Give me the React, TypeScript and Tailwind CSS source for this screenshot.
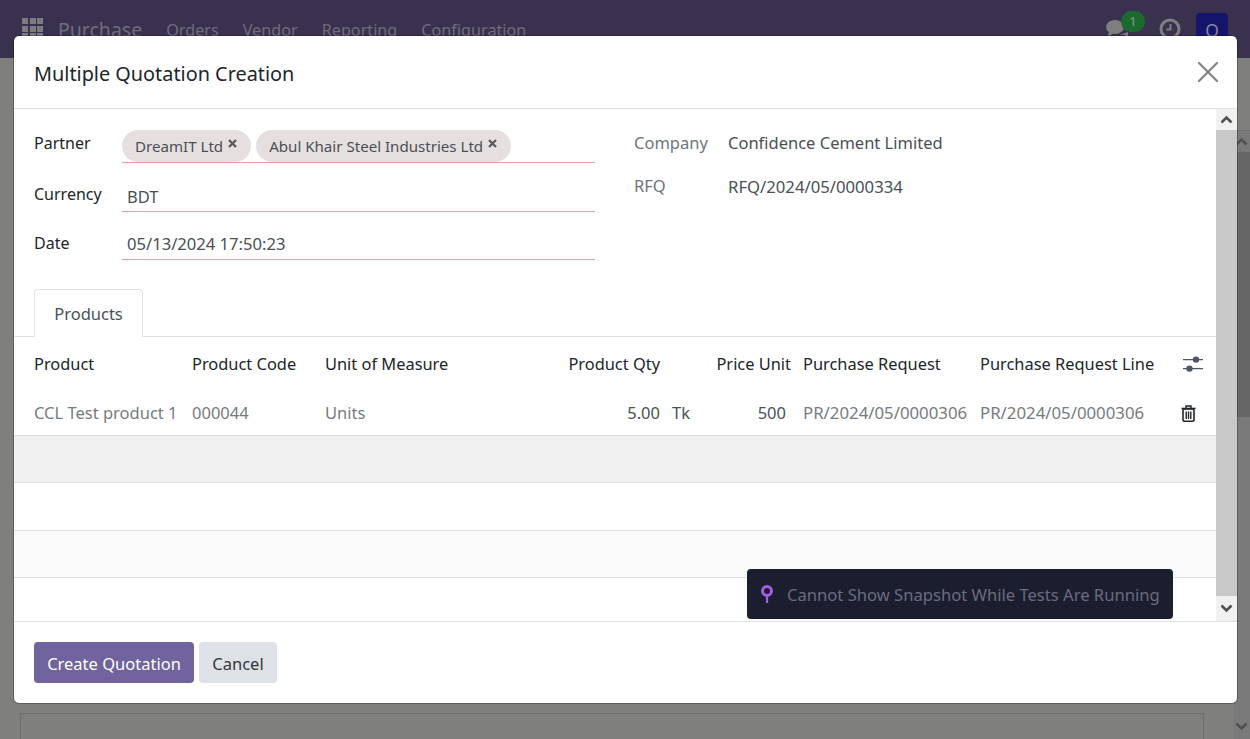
import React from 'react';
import { X } from 'lucide-react';

const navItems = ['Orders', 'Vendor', 'Reporting', 'Configuration'];

const columns = [
  { label: 'Product', cls: 'w-[178px] pl-5' },
  { label: 'Product Code', cls: 'w-[133px]' },
  { label: 'Unit of Measure', cls: 'w-[233px]' },
  { label: 'Product Qty', cls: 'w-[102px] text-right' },
  { label: '', cls: 'w-[45px]' },
  { label: 'Price Unit', cls: 'w-[86px] text-right' },
  { label: 'Purchase Request', cls: 'w-[177px] pl-3' },
  { label: 'Purchase Request Line', cls: 'w-[215px] pl-3' },
];

function Chevron({ up }: { up?: boolean }) {
  return (
    <svg width="13" height="9" viewBox="0 0 13 9" fill="none">
      <path d={up ? 'M1.5 7.5 6.5 2.5 11.5 7.5' : 'M1.5 1.5 6.5 6.5 11.5 1.5'} stroke="#505050" strokeWidth="2.6" />
    </svg>
  );
}

function Tag({ label }: { label: string }) {
  return (
    <span className="flex h-[32px] items-center whitespace-nowrap rounded-full bg-[#e6dfdf] pl-[13px] pr-[14px] text-[15.1px] text-[#4a4f55]">
      {label}
      <svg width="9" height="9" viewBox="0 0 9 9" className="ml-[5px] -mt-[5px]">
        <path d="M1 1 8 8M8 1 1 8" stroke="#5a5a5a" strokeWidth="2.3" />
      </svg>
    </span>
  );
}

function FormRow({ label, labelClass, children, className }: { label: string; labelClass: string; children: React.ReactNode; className: string }) {
  return (
    <div className={`flex h-[33px] ${className}`}>
      <span className={`w-[88px] shrink-0 text-[16px] text-[#212529] ${labelClass}`}>{label}</span>
      <div className="flex flex-1 border-b border-[#f29b9f]">{children}</div>
    </div>
  );
}

function Background() {
  return (
    <div className="flex h-[739px] w-full flex-col overflow-hidden bg-[#7f807e]">
      <div className="flex h-[58px] shrink-0 items-start bg-[#3a314f] text-[#706c7a]">
        <div className="ml-[22px] mt-[18px] grid grid-cols-3 gap-[1.5px]">
          {Array.from({ length: 9 }).map((_, i) => (
            <span key={i} className="h-[6px] w-[6px] bg-[#7c7c7c]" />
          ))}
        </div>
        <span className="ml-[15px] mt-[16px] text-[19.5px] leading-7">Purchase</span>
        <div className="ml-[24px] mt-[18px] flex gap-[24px] text-[16.2px] leading-6">
          {navItems.map((item) => (
            <span key={item}>{item}</span>
          ))}
        </div>
        <div className="ml-auto mr-[22px] flex">
          <div className="relative mt-[19px] h-[20px] w-[24px]">
            <svg width="24" height="20" viewBox="0 0 24 20" fill="#7f7f80">
              <ellipse cx="10" cy="8" rx="9" ry="7" />
              <path d="M4 12 3 18l6-4z" />
              <path d="M15 16h5l3 3v-6z" />
            </svg>
            <span className="absolute left-[16px] -top-[8px] flex h-[21px] w-[24px] items-center justify-center rounded-full bg-[#1b6b30] text-[13px] text-[#7f9f87]">
              1
            </span>
          </div>
          <svg width="22" height="22" viewBox="0 0 22 22" fill="none" className="ml-[30px] mt-[18px]">
            <circle cx="11" cy="11" r="9" stroke="#7f7f80" strokeWidth="3" />
            <path d="M11.5 6v5.5H7.5" stroke="#7f7f80" strokeWidth="2" />
          </svg>
          <div className="ml-[15px] mt-[13px] flex h-[34px] w-[32px] items-center justify-center rounded-[4px] bg-[#14146b] text-[17.5px] text-[#8284a0]">
            Q
          </div>
        </div>
      </div>

      <div className="flex min-h-0 flex-1">
        <div className="flex min-w-0 flex-1 flex-col justify-end pl-[20px] pr-[29px]">
          <div className="h-[26px] border-l border-r border-t border-[#6f6f6f]" />
        </div>
        <div className="flex w-[17px] shrink-0 flex-col">
          <div className="h-[73px] border-b border-[#6f6f6f]" />
          <div className="flex h-[21px] items-center justify-center bg-[#797979]">
            <Chevron up />
          </div>
          <div className="h-[265px] bg-[#666666]" />
          <div className="flex flex-1 items-end justify-center bg-[#7a7a7a] pb-[8px]">
            <Chevron />
          </div>
        </div>
      </div>
    </div>
  );
}

export default function App() {
  return (
    <div className="relative h-[739px] w-full overflow-hidden font-['Noto_Sans',sans-serif] text-[16.5px] text-[#4a4f55]">
      <Background />

      {/* Modal */}
      <div className="absolute left-[14px] top-[36px] flex h-[667px] w-[1223px] flex-col rounded-[5px] bg-white shadow-[0_0_0_1px_rgba(0,0,0,0.25)]">
        <div className="flex h-[73px] items-center justify-between border-b border-[#dee2e6] pl-5 pr-[11px]">
          <h4 className="pt-[3px] text-[19.85px] text-[#212529]">Multiple Quotation Creation</h4>
          <X size={36} strokeWidth={1.4} className="text-[#808080]" />
        </div>

        <div className="flex min-h-0 flex-1">
          <div className="min-w-0 flex-1">
            {/* Form */}
            <div className="flex h-[180px] px-5 pt-[21px]">
              <div className="w-[561px]">
                <FormRow label="Partner" labelClass="pt-[1px]" className="">
                  <div className="flex gap-[5px]">
                    <Tag label="DreamIT Ltd" />
                    <Tag label="Abul Khair Steel Industries Ltd" />
                  </div>
                </FormRow>
                <FormRow label="Currency" labelClass="pt-[1px]" className="mt-[16px] pt-[2px]">
                  <span className="pl-[5px] pt-[4px]">BDT</span>
                </FormRow>
                <FormRow label="Date" labelClass="pt-[3px]" className="mt-[15px] pt-[1px]">
                  <span className="pl-[5px] pt-[5px] leading-[22px] text-[16.6px]">05/13/2024 17:50:23</span>
                </FormRow>
              </div>
              <div className="ml-[39px] pt-[1px]">
                <div className="flex">
                  <span className="w-[94px] text-[#6c757d]">Company</span>
                  <span>Confidence Cement Limited</span>
                </div>
                <div className="mt-[18px] flex">
                  <span className="w-[94px] text-[#6c757d]">RFQ</span>
                  <span className="text-[16.7px]">RFQ/2024/05/0000334</span>
                </div>
              </div>
            </div>

            {/* Tabs */}
            <div className="flex h-[48px] items-end border-b border-[#dee2e6] pl-5">
              <div className="-mb-[1px] flex h-[48px] w-[109px] items-center justify-center rounded-t-[4px] border border-[#dee2e6] border-b-white bg-white pt-[2px] text-[#495057]">
                Products
              </div>
            </div>

            {/* Table */}
            <div className="relative">
              <div className="flex h-[54px] items-center text-[16.4px] text-[#212529]">
                {columns.map((col, i) => (
                  <span key={i} className={`shrink-0 whitespace-nowrap ${col.cls}`}>
                    {col.label}
                  </span>
                ))}
                <svg width="20" height="18" viewBox="0 0 20 18" fill="#4b5563" className="shrink-0">
                  <path d="M0 4h20v1.3H0zM0 13h20v1.3H0z" />
                  <circle cx="13" cy="4.6" r="3.2" />
                  <circle cx="6.5" cy="13.6" r="3.2" />
                </svg>
              </div>
              <div className="flex h-[45px] items-center border-b border-[#dee2e6] text-[#777b80]">
                <span className="w-[178px] shrink-0 whitespace-nowrap pl-5">CCL Test product 1</span>
                <span className="w-[133px] shrink-0">000044</span>
                <span className="w-[233px] shrink-0">Units</span>
                <span className="w-[102px] shrink-0 text-right text-[#495057]">5.00</span>
                <span className="w-[45px] shrink-0 pl-3 text-[#495057]">Tk</span>
                <span className="w-[81px] shrink-0 text-right text-[#495057]">500</span>
                <span className="w-[177px] shrink-0 whitespace-nowrap pl-[17px] text-[16.8px]">PR/2024/05/0000306</span>
                <span className="w-[218px] shrink-0 whitespace-nowrap pl-[17px] text-[16.8px]">PR/2024/05/0000306</span>
                <svg width="15" height="17" viewBox="0 0 15 17" fill="none" stroke="#212529" className="shrink-0">
                  <path d="M.5 3.5h14" strokeWidth="1.6" />
                  <path d="M5 3.2V1h5v2.2" strokeWidth="1.4" />
                  <rect x="2" y="4" width="11" height="12.2" rx="1.3" strokeWidth="1.6" />
                  <path d="M5.2 6.5v7.5M7.5 6.5v7.5M9.8 6.5v7.5" strokeWidth="1.4" />
                </svg>
              </div>
              <div className="h-[47px] border-b border-[#dee2e6] bg-[#f0f0f0]" />
              <div className="h-[48px] border-b border-[#dee2e6] bg-white" />
              <div className="h-[47px] border-b border-[#dee2e6] bg-[#fafafa]" />
              <div className="h-[43px] bg-white" />

              <div className="absolute left-[733px] top-[232px] flex h-[50px] w-[426px] items-center rounded-[4px] bg-[#1b1e2f] pl-[13px] text-[#6a6c80]">
                <svg width="14" height="18" viewBox="0 0 14 18" className="mr-[13px] shrink-0" fill="none">
                  <circle cx="7" cy="6" r="4.5" stroke="#a45ee5" strokeWidth="3" />
                  <path d="M7 11v7" stroke="#a45ee5" strokeWidth="2.2" />
                </svg>
                <span className="whitespace-nowrap pt-[2px] text-[16.6px]">Cannot Show Snapshot While Tests Are Running</span>
              </div>
            </div>
          </div>

          {/* Scrollbar */}
          <div className="flex w-[21px] shrink-0 flex-col bg-[#f1f1f1]">
            <div className="flex h-[21px] items-center justify-center">
              <Chevron up />
            </div>
            <div className="flex-1 bg-[#c8c8c8]" />
            <div className="flex h-[25px] items-center justify-center">
              <Chevron />
            </div>
          </div>
        </div>

        {/* Footer */}
        <div className="flex h-[82px] items-center gap-[5px] border-t border-[#dee2e6] px-5">
          <button className="h-[41px] w-[160px] rounded-[4px] bg-[#71639e] pt-[4px] text-white">Create Quotation</button>
          <button className="h-[41px] w-[78px] rounded-[4px] bg-[#dee2e6] pt-[4px] text-[#32373c]">Cancel</button>
        </div>
      </div>
    </div>
  );
}
